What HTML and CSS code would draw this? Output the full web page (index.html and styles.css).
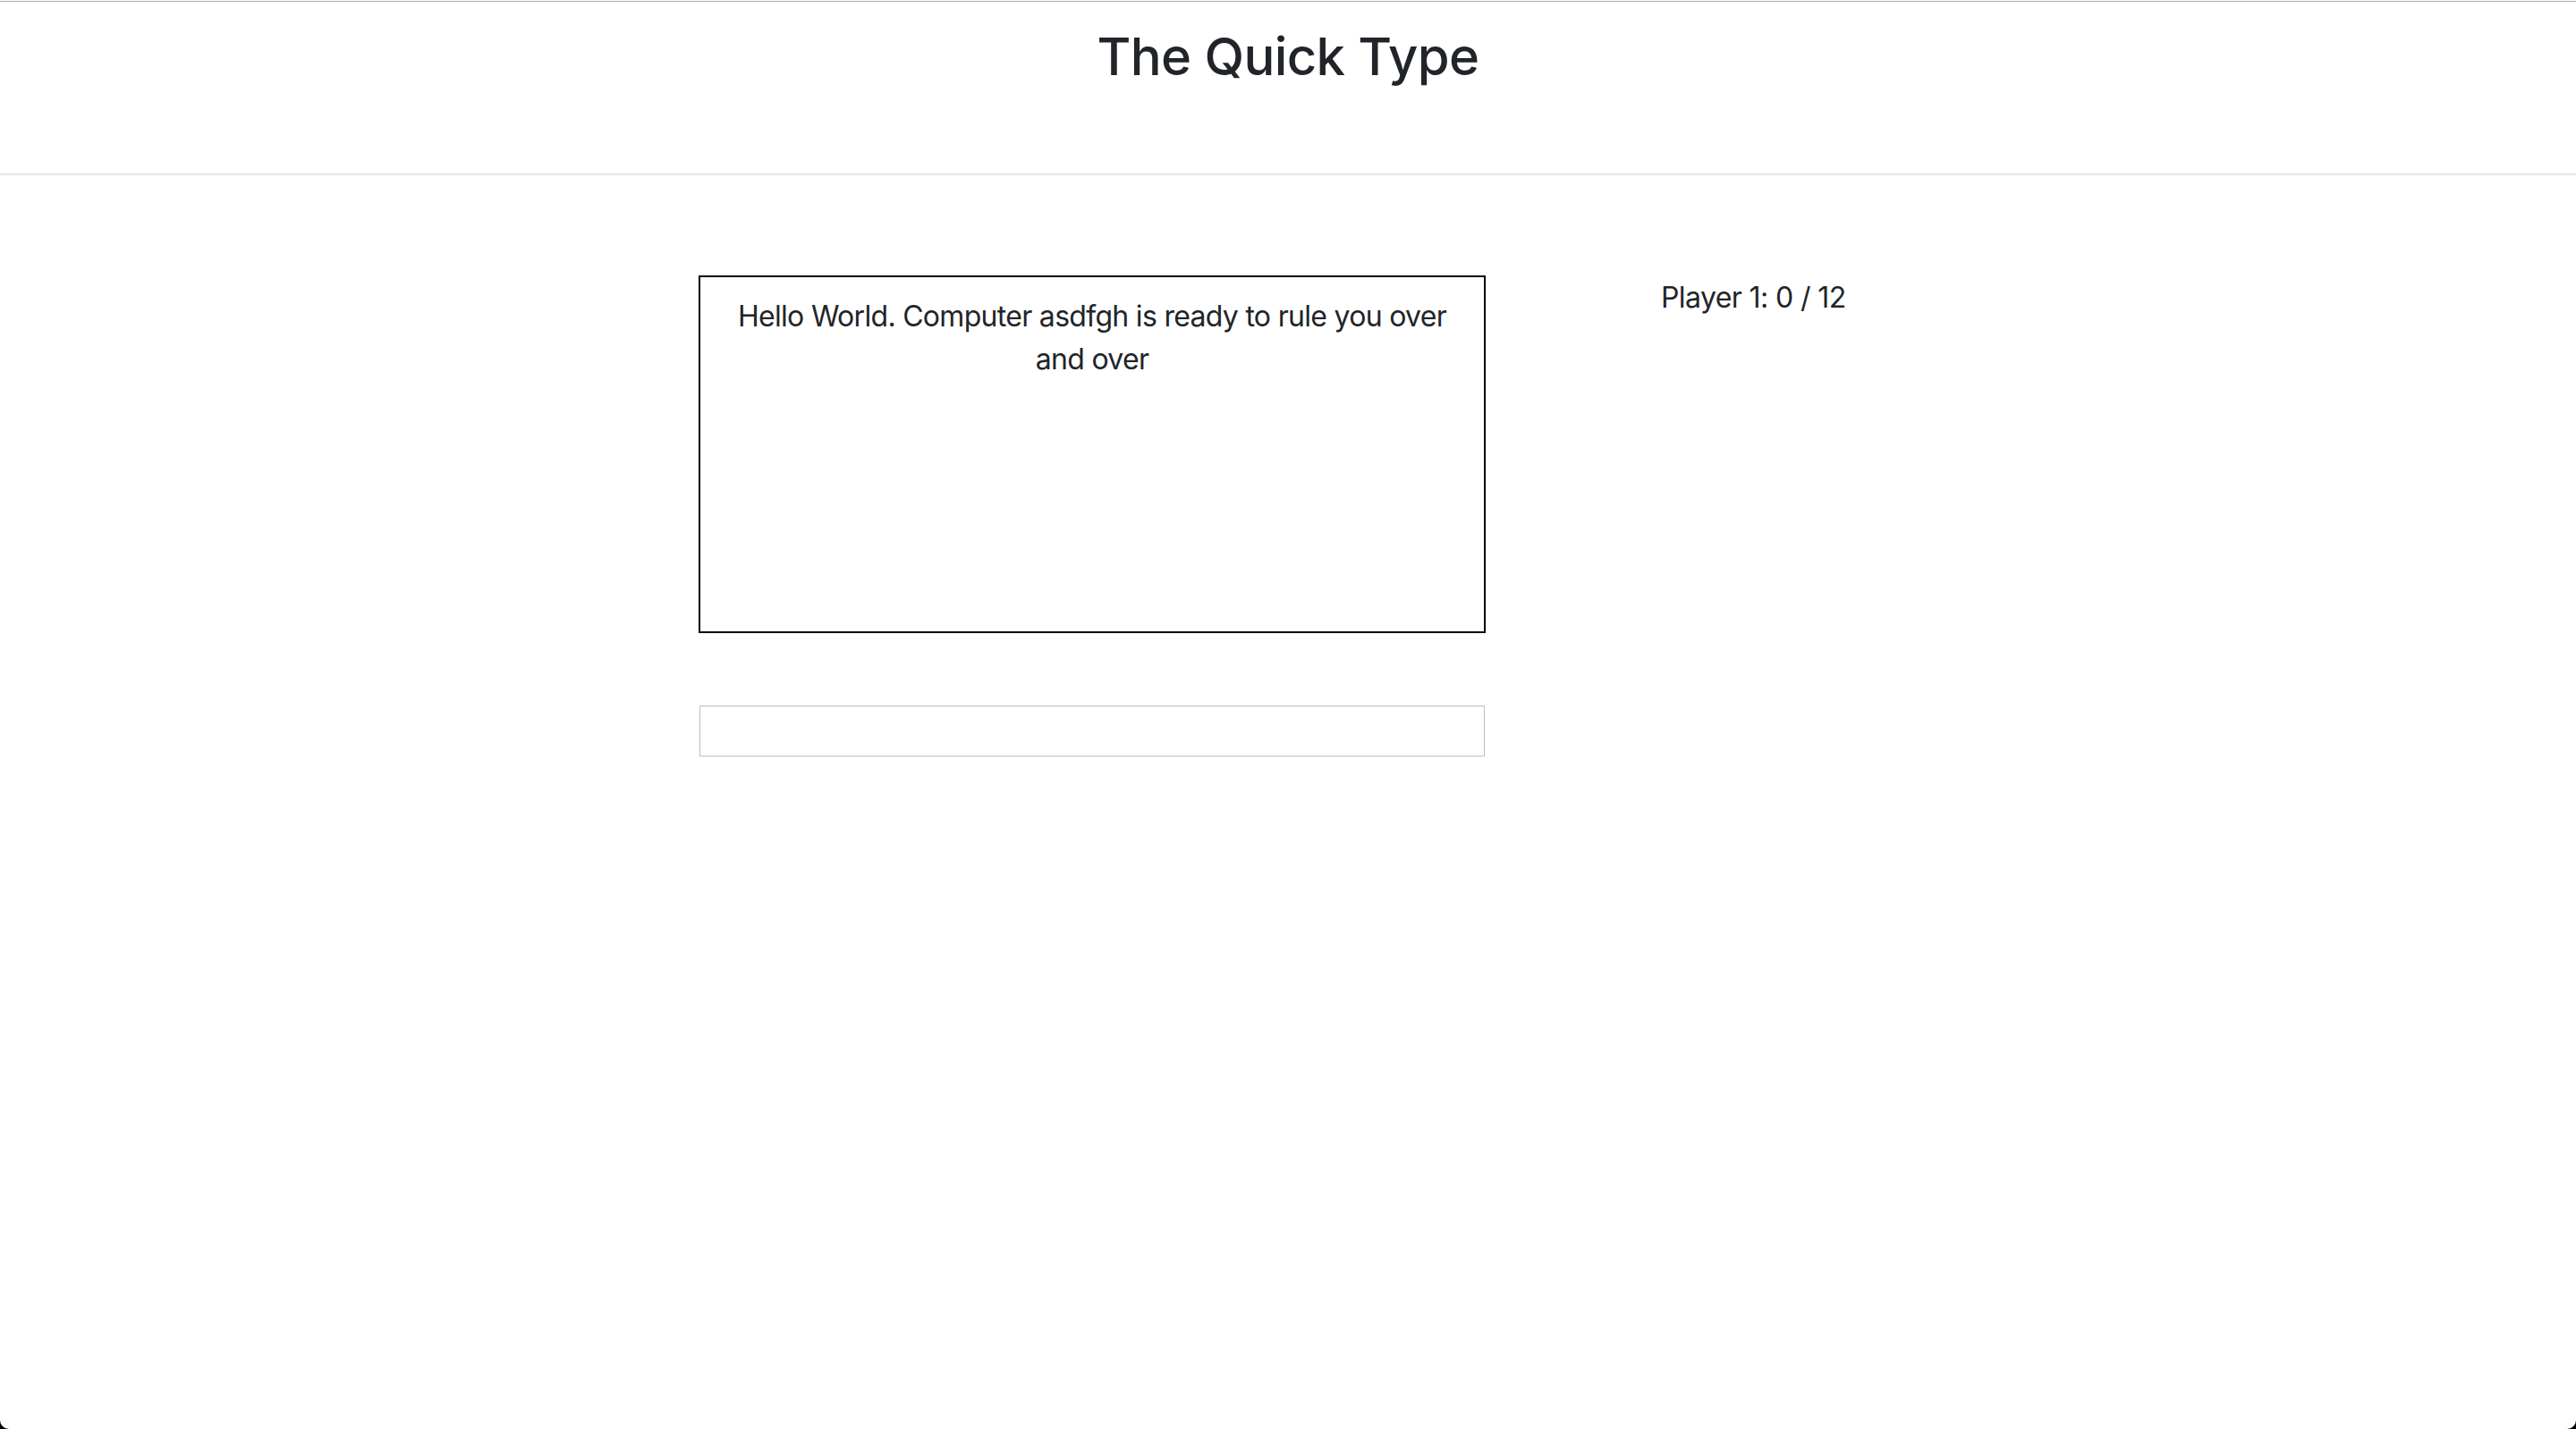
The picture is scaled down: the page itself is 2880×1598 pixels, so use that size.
FILE: index.html
```html
<!DOCTYPE html>
<html lang="en">
<head>
<meta charset="utf-8">
<title>The Quick Type</title>
<link rel="stylesheet" href="styles.css">
</head>
<body>
<div class="page">
  <header class="site-header">
    <h1 class="title">The Quick Type</h1>
  </header>
  <main class="game">
    <section class="play-area">
      <div class="quote-box">
        <p class="quote">Hello World. Computer asdfgh is ready to rule you over and over</p>
      </div>
      <input class="type-input" type="text" aria-label="Type here">
    </section>
    <aside class="scoreboard">
      <p class="score">Player 1: 0 / 12</p>
    </aside>
  </main>
</div>
</body>
</html>
```

FILE: styles.css
```css
html {
  background: #000;
}
body {
  margin: 0;
  font-family: Inter, "Noto Sans", "Liberation Sans", sans-serif;
  color: #212529;
}
.page {
  background: #fff;
  min-height: 1598px;
  box-sizing: border-box;
  padding-top: 1px;
  border-radius: 0 0 10px 10px;
}
.site-header {
  border-top: 1px solid #ababab;
  border-bottom: 2px solid #e6e6e6;
  height: 192px;
  box-sizing: content-box;
  text-align: center;
}
.title {
  margin: 0;
  padding-top: 26px;
  font-size: 58px;
  font-weight: 500;
  line-height: 70px;
  color: #212529;
  letter-spacing: -0.6px;
}
.game {
  width: 1318px;
  margin: 0 auto;
  padding-top: 112px;
  display: grid;
  grid-template-columns: 880px 1fr;
  column-gap: 196px;
}
.play-area {
  display: flex;
  flex-direction: column;
  gap: 81px;
}
.quote-box {
  height: 400px;
  box-sizing: border-box;
  border: 2px solid #000;
  padding: 20px 30px;
}
.quote {
  margin: 0;
  text-align: center;
  font-size: 32px;
  line-height: 48px;
  letter-spacing: -0.7px;
  color: #212529;
}
.type-input {
  margin: 0 1px;
  height: 57px;
  box-sizing: border-box;
  border: 1px solid #bdbdbd;
  padding: 0 12px;
  font-family: inherit;
  font-size: 32px;
  outline: none;
}
.scoreboard {
  padding-top: 1px;
}
.score {
  margin: 0;
  font-size: 32px;
  line-height: 48px;
  letter-spacing: -0.6px;
  color: #212529;
}
```
